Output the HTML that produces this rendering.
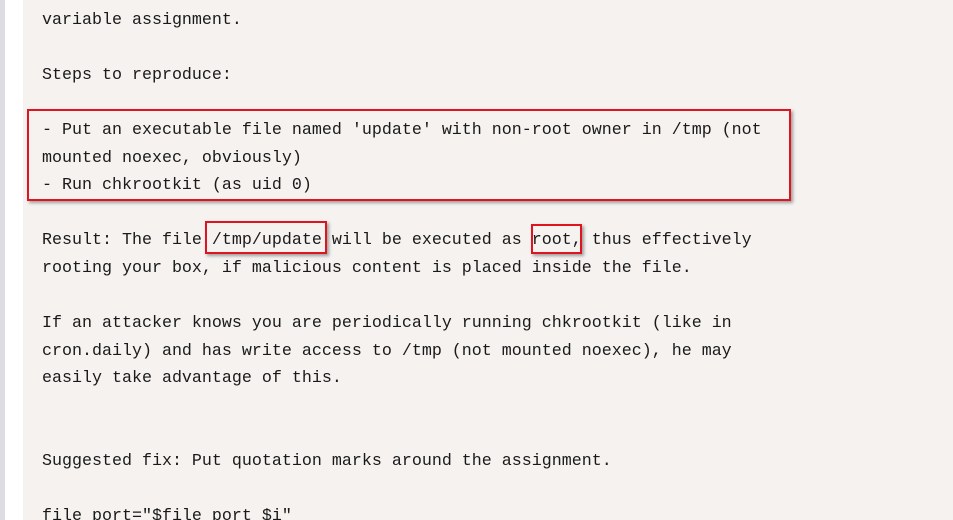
<!DOCTYPE html>
<html><head><style>
html,body{margin:0;padding:0;width:953px;height:520px;overflow:hidden;background:#f5f2f0;position:relative;}
.g{position:absolute;left:0;top:0;width:5px;height:520px;background:#dcdce2;}
.w{position:absolute;left:5px;top:0;width:18px;height:520px;background:#fff;}
.c{position:absolute;left:0;top:0;width:953px;height:520px;overflow:hidden;}
pre{position:absolute;left:42px;top:-21px;margin:0;font-family:"Liberation Mono",monospace;font-size:16.67px;line-height:27.6px;color:#1a1a1a;}
.b{position:absolute;border:2px solid #e0141e;box-shadow:2px 2px 3px rgba(0,0,0,0.35);box-sizing:border-box;}
</style></head><body>
<div class="c">
<div class="g"></div><div class="w"></div>
<pre>file_port is not quoted in the
variable assignment.

Steps to reproduce:

- Put an executable file named 'update' with non-root owner in /tmp (not
mounted noexec, obviously)
- Run chkrootkit (as uid 0)

Result: The file /tmp/update will be executed as root, thus effectively
rooting your box, if malicious content is placed inside the file.

If an attacker knows you are periodically running chkrootkit (like in
cron.daily) and has write access to /tmp (not mounted noexec), he may
easily take advantage of this.


Suggested fix: Put quotation marks around the assignment.

file_port="$file_port $i"</pre>
<div class="b" style="left:27px;top:109px;width:764px;height:92px"></div>
<div class="b" style="left:205px;top:221px;width:122px;height:33px"></div>
<div class="b" style="left:531px;top:224px;width:51px;height:30px"></div>
</div>
</body></html>
